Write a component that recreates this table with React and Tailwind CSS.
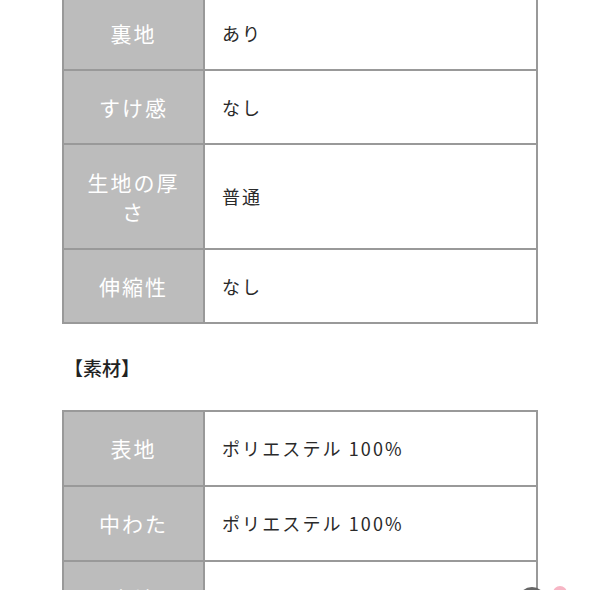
import React from "react";

const Row = ({ label, value, h }) => {
  return (
    <div className="flex border-b-2 border-[#999] last:border-b-0">
      <div
        className={`w-[141px] shrink-0 bg-[#bcbcbc] border-r-2 border-[#999] flex items-center justify-center px-[18px] text-center text-white text-[21px] leading-[29px] tracking-[2px] ${h}`}
      >
        {label}
      </div>
      <div className="flex-1 flex items-center pl-[17px] text-[#2a2a2a] text-[18px] tracking-[2.1px]">
        {value}
      </div>
    </div>
  );
};

const App = () => {
  return (
    <div
      className="relative w-full h-[590px] overflow-hidden bg-white"
      style={{ fontFamily: '"Noto Sans CJK JP", "Noto Sans", sans-serif' }}
    >
      <div className="ml-[62px] w-[476px] -mt-[5px]">
        <div className="border-2 border-[#999]">
          <Row label="裏地" value="あり" h="h-[72px]" />
          <Row label="すけ感" value="なし" h="h-[72px]" />
          <Row label="生地の厚さ" value="普通" h="h-[103px]" />
          <Row label="伸縮性" value="なし" h="h-[72px]" />
        </div>

        <h2 className="mt-[30px] mb-[28px] pl-[2px] text-[19px] leading-[28px] font-medium text-[#222]">
          【素材】
        </h2>

        <div className="border-2 border-b-0 border-[#999]">
          <Row label="表地" value="ポリエステル 100%" h="h-[73px]" />
          <Row label="中わた" value="ポリエステル 100%" h="h-[73px]" />
          <Row label="裏地" value="ポリエステル 100%" h="h-[73px]" />
        </div>
      </div>

      <div className="absolute left-[518px] top-[587px] w-[28px] h-[28px] rounded-full bg-[#666]" />
      <div className="absolute left-[553px] top-[586px] w-[14px] h-[14px] rounded-full bg-[#f7b6c5]" />
    </div>
  );
};

export default App;
